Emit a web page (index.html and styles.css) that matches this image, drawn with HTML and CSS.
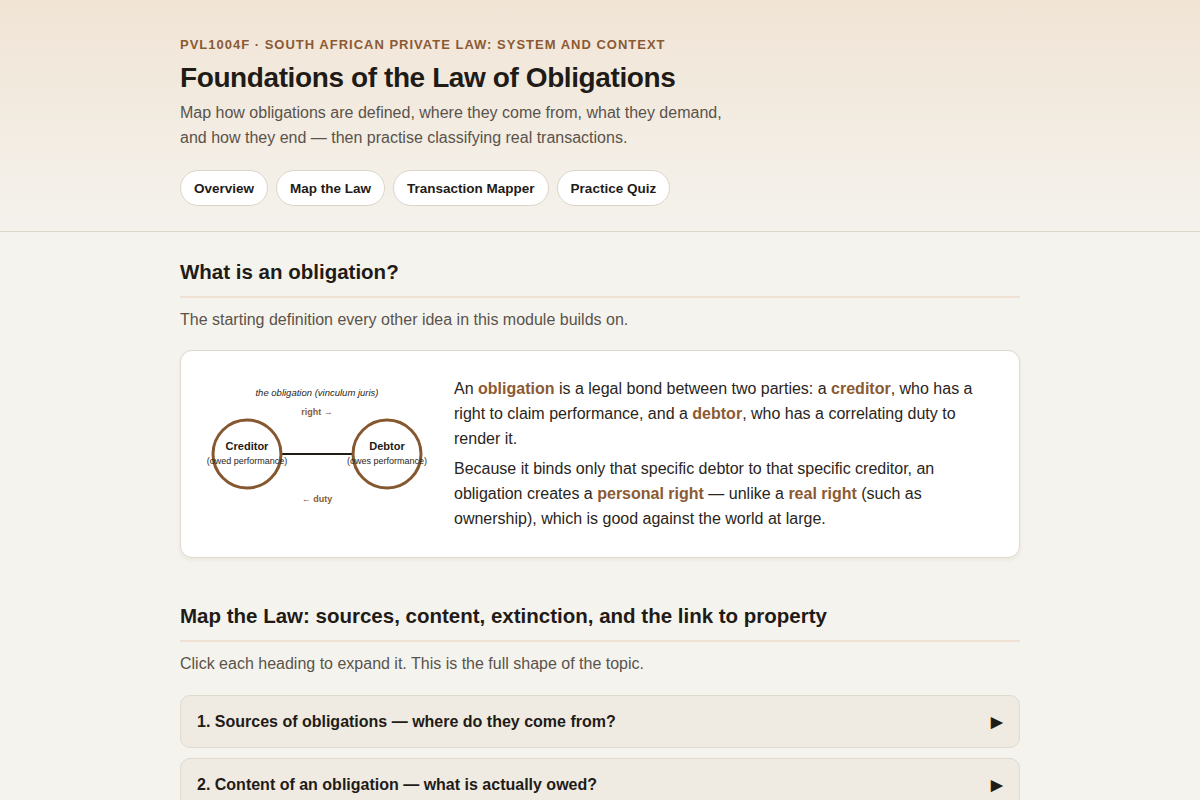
FILE: index.html
```html
<!DOCTYPE html>
<html lang="en">
<head>
<meta charset="utf-8">
<title>Foundations of the Law of Obligations</title>
<link rel="stylesheet" href="styles.css">
</head>
<body>
<header class="hero">
  <div class="wrap">
    <div class="eyebrow">PVL1004F · South African Private Law: System and Context</div>
    <h1 class="title">Foundations of the Law of Obligations</h1>
    <p class="lede">Map how obligations are defined, where they come from, what they demand,<br>and how they end — then practise classifying real transactions.</p>
    <nav class="tabs">
      <button class="tab">Overview</button>
      <button class="tab">Map the Law</button>
      <button class="tab">Transaction Mapper</button>
      <button class="tab">Practice Quiz</button>
    </nav>
  </div>
</header>
<main class="wrap">
  <section class="section">
    <h2 class="section-title">What is an obligation?</h2>
    <p class="section-desc">The starting definition every other idea in this module builds on.</p>
    <div class="card">
      <svg class="diagram" width="225" height="150" viewBox="0 0 225 150">
        <text x="112" y="17" class="d-cap">the obligation (vinculum juris)</text>
        <text x="112" y="36" class="d-arrow">right →</text>
        <line x1="77" y1="75" x2="147" y2="75" stroke="#1f1b17" stroke-width="2"/>
        <circle cx="42" cy="75" r="34" fill="none" stroke="#85582f" stroke-width="3"/>
        <circle cx="182" cy="75" r="34" fill="none" stroke="#85582f" stroke-width="3"/>
        <text x="42" y="71" class="d-name">Creditor</text>
        <text x="42" y="85" class="d-sub">(owed performance)</text>
        <text x="182" y="71" class="d-name">Debtor</text>
        <text x="182" y="85" class="d-sub">(owes performance)</text>
        <text x="112" y="123" class="d-arrow">← duty</text>
      </svg>
      <div class="card-text">
        <p>An <strong>obligation</strong> is a legal bond between two parties: a <strong>creditor</strong>, who has a right to claim performance, and a <strong>debtor</strong>, who has a correlating duty to render it.</p>
        <p>Because it binds only that specific debtor to that specific creditor, an obligation creates a <strong>personal right</strong> — unlike a <strong>real right</strong> (such as ownership), which is good against the world at large.</p>
      </div>
    </div>
  </section>
  <section class="section">
    <h2 class="section-title">Map the Law: sources, content, extinction, and the link to property</h2>
    <p class="section-desc">Click each heading to expand it. This is the full shape of the topic.</p>
    <div class="accordion">
      <div class="acc-item"><span>1. Sources of obligations — where do they come from?</span><span class="acc-icon">▶</span></div>
      <div class="acc-item"><span>2. Content of an obligation — what is actually owed?</span><span class="acc-icon">▶</span></div>
      <div class="acc-item"><span>3. Extinction of obligations — how do they end?</span><span class="acc-icon">▶</span></div>
    </div>
  </section>
</main>
</body>
</html>
```
FILE: styles.css
```css
* { box-sizing: border-box; }
html, body { margin: 0; padding: 0; }
body {
  background: #f5f3ee;
  font-family: "Liberation Sans", Arial, sans-serif;
  color: #1f1b17;
}
.wrap {
  max-width: 840px;
  margin: 0 auto;
}
.hero {
  background: linear-gradient(180deg, #f1e4d5 0%, #f3ece2 55%, #f4f2ed 100%);
  border-bottom: 1px solid #dcd5ca;
  padding: 37px 0 25px;
}
.eyebrow {
  font-size: 13px;
  line-height: 16px;
  font-weight: 700;
  letter-spacing: 1px;
  text-transform: uppercase;
  color: #8b5a33;
}
.title {
  margin: 8px 0 0;
  font-size: 28px;
  line-height: 34px;
  font-weight: 700;
  letter-spacing: -0.4px;
  color: #1f1b17;
}
.lede {
  margin: 5px 0 0;
  font-size: 16px;
  line-height: 25px;
  color: #5a534b;
}
.tabs {
  display: flex;
  gap: 8px;
  margin-top: 20px;
}
.tab {
  height: 36px;
  padding: 0 13px;
  border: 1px solid #dcd4c7;
  border-radius: 18px;
  background: #fff;
  font-family: "Liberation Sans", Arial, sans-serif;
  font-size: 13.5px;
  font-weight: 700;
  color: #1f1b17;
}
.section { padding-top: 27px; }
.section + .section { padding-top: 45px; }
.section-title {
  margin: 0;
  font-size: 20.5px;
  line-height: 26px;
  font-weight: 700;
  padding-bottom: 11px;
  border-bottom: 2px solid #efe2d4;
}
.section-desc {
  margin: 10px 0 0;
  font-size: 16px;
  line-height: 24px;
  color: #5a534b;
}
.card {
  margin-top: 18px;
  background: #fff;
  border: 1px solid #e0d9ce;
  border-radius: 12px;
  box-shadow: 0 2px 4px rgba(60, 40, 20, 0.06);
  padding: 26px 24px 25px;
  display: grid;
  grid-template-columns: 225px 1fr;
  gap: 24px;
  align-items: center;
}
.diagram { display: block; font-family: "Liberation Sans", Arial, sans-serif; }
.d-cap { font-size: 9.5px; font-style: italic; fill: #2a2520; text-anchor: middle; }
.d-arrow { font-size: 9px; font-weight: 700; fill: #8b5a33; text-anchor: middle; }
.d-name { font-size: 11px; font-weight: 700; fill: #1f1b17; text-anchor: middle; }
.d-sub { font-size: 9px; fill: #2a2520; text-anchor: middle; }
.card-text p {
  margin: 0 0 6px;
  font-size: 16px;
  line-height: 24.8px;
  color: #2a2520;
}
.card-text p:last-child { margin-bottom: 0; }
.card-text strong { color: #8b5a33; }
.accordion {
  margin-top: 19px;
  display: flex;
  flex-direction: column;
  gap: 10px;
}
.acc-item {
  display: flex;
  justify-content: space-between;
  align-items: center;
  background: #efebe3;
  border: 1px solid #e0d9ce;
  border-radius: 10px;
  padding: 15px 16px 14px;
  font-size: 16px;
  line-height: 22px;
  font-weight: 700;
  color: #1f1b17;
}
.acc-icon { font-size: 15px; }
```
